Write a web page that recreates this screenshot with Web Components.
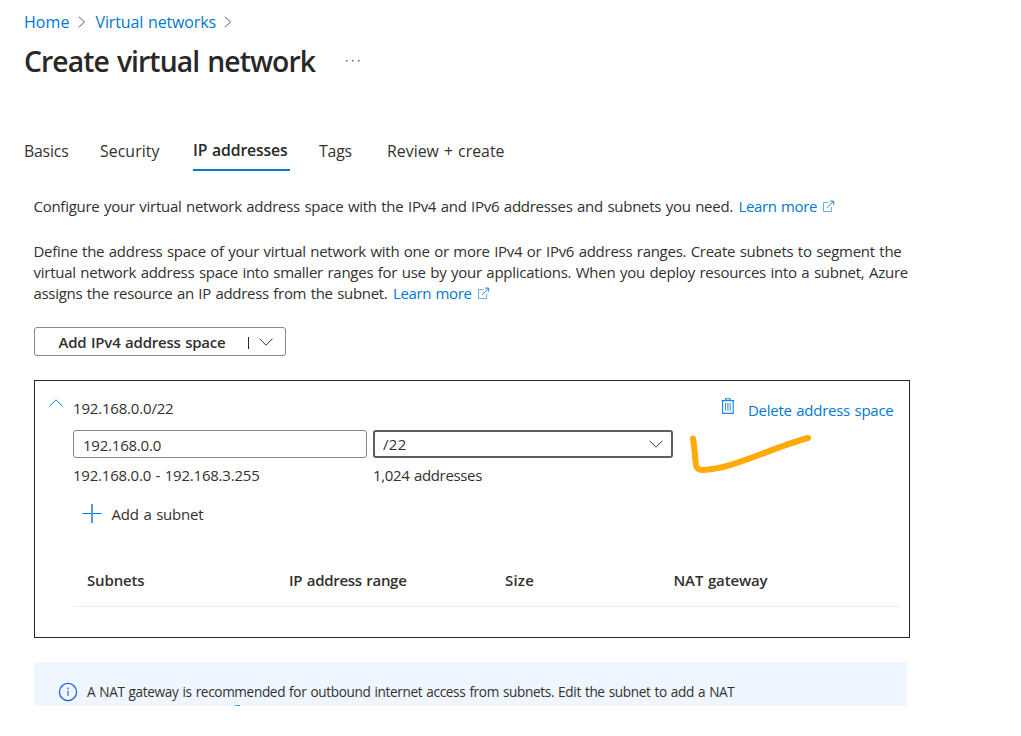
<!DOCTYPE html>
<html lang="en">
<head>
<meta charset="utf-8">
<title>Create virtual network</title>
<style>
html,body{margin:0;padding:0;background:#fff}
body{width:1021px;height:736px;overflow:hidden;font-family:"Open Sans","Noto Sans",sans-serif;font-size:15px;line-height:20px;color:#323130}
</style>
</head>
<body>
<vnet-page></vnet-page>
<script>
const define = (name, html, init) => {
  const t = document.createElement('template');
  t.innerHTML = html;
  customElements.define(name, class extends HTMLElement {
    connectedCallback() {
      if (this.shadowRoot) return;
      this.attachShadow({mode: 'open'}).append(t.content.cloneNode(true));
      if (init) init(this, this.shadowRoot);
    }
  });
};

/* A single line of text whose tracking is adjusted to fill a given width. */
define('text-run', `<style>
:host{display:inline-block;white-space:nowrap;flex:none}
span{display:inline-block;white-space:pre;word-spacing:.06em}
</style><span><slot></slot></span>`, (el, root) => {
  const w = parseFloat(el.getAttribute('w'));
  const span = root.querySelector('span');
  el.style.width = w + 'px';
  const natural = span.getBoundingClientRect().width;
  span.style.letterSpacing = ((w - natural) / el.textContent.length).toFixed(4) + 'px';
});

const icons = {
  right: [8, 12, '<path d="M.8 .8L6.6 6L.8 11.2" stroke="#605e5c"/>'],
  down: [14, 8, '<path d="M.5 .7L7 7.2L13.5 .7" stroke="#323130"/>'],
  up: [14, 8, '<path d="M.3 7.5L7 .8L13.7 7.5" stroke="#0078d4"/>'],
  external: [13, 13, '<path d="M6.5 2.5H1.5V11.5H9.5V7" stroke="#6db0e6"/><path d="M5 7.8L11.7 1.1M8 1.1H11.7V4.8" stroke="#2586d8"/>'],
  plus: [20, 20, '<path d="M.5 9.5H19.5" stroke="#0078d4"/><path d="M10 0V19" stroke="#4a9fe0" stroke-width="2"/>'],
  trash: [14, 16, '<path d="M.5 2.6H13.3M4.6 2.5V.7H9.3V2.5M1.6 2.6V15.3H12.2V2.6" stroke="#2586d8" stroke-width="1.15"/><path d="M4.6 5V12.7M6.9 5V12.7M9.2 5V12.7" stroke="#2586d8"/>'],
  info: [20, 20, '<circle cx="10" cy="10" r="8.6" stroke="#1a66dd" stroke-width="1.3"/><path d="M10 8.4V14" stroke="#1a66dd" stroke-width="1.1"/><circle cx="10" cy="6.4" r=".8" fill="#1a66dd"/>'],
  more: [16, 4, '<path d="M1 1h1.5v1.5H1zM7 1h1.5v1.5H7zM13 1h1.5v1.5H13z" fill="#605e5c"/>'],
  check: [124, 42, '<path d="M5 5.5C6.7 15 7 25 8 32Q9 37 14 37C46 36 82 15 120 5" stroke="#ffaa05" stroke-width="6" stroke-linecap="round" stroke-linejoin="round"/>']
};
define('line-icon', `<style>:host{display:inline-block;flex:none;line-height:0}svg{display:block}</style><div></div>`, (el, root) => {
  const [w, h, body] = icons[el.getAttribute('name')];
  root.querySelector('div').innerHTML = `<svg width="${w}" height="${h}" viewBox="0 0 ${w} ${h}" fill="none">${body}</svg>`;
});

define('bread-crumbs', `<style>
:host{display:flex;align-items:center;height:20px;padding:12px 0 0 24px;color:#0078d4;font-size:16px}
line-icon{margin:0 10px 0 8px}
</style><text-run w="45.5">Home</text-run><line-icon name="right"></line-icon><text-run w="120.5">Virtual networks</text-run><line-icon name="right"></line-icon>`);

define('page-title', `<style>
:host{display:flex;align-items:center;height:40px;margin-top:9px;padding-left:24px;line-height:40px;font-size:28.3px;font-weight:600;color:#292827}
line-icon{margin-left:30px}
</style><slot></slot><line-icon name="more"></line-icon>`);

define('tab-item', `<style>
:host{display:block;height:30px;padding-top:1px;box-sizing:border-box;font-size:15.8px}
:host([selected]){padding-top:0;height:31px;font-weight:600;color:#292827;border-bottom:2px solid #0078d4}
</style><slot></slot>`);

define('tab-strip', `<style>
:host{display:flex;height:31px;margin-top:59px;padding-left:24px}
</style><slot></slot>`);

define('doc-link', `<style>
:host{display:inline-flex;align-items:center;color:#0078d4}
line-icon{margin-left:5px}
</style><slot></slot><line-icon name="external"></line-icon>`);

define('split-button', `<style>
:host{display:flex;align-items:center;box-sizing:border-box;width:252px;height:29px;margin:23px 0 0 34px;padding-left:23.5px;border:1px solid #8a8886;border-radius:3px;font-weight:600}
i{width:1px;height:12px;background:#292827;margin:2px 10.5px 0 22px}
</style><text-run w="167">Add IPv4 address space</text-run><i></i><line-icon name="down"></line-icon>`);

define('field-box', `<style>
:host{display:flex;align-items:center;justify-content:space-between;box-sizing:border-box;height:28px;padding:1px 10px 0 9px;border:1px solid #8a8886;border-radius:3px;width:294px}
:host([select]){width:300px;border:2px solid #605e5c;padding:0 8px}
</style><slot></slot>`);

define('address-card', `<style>
:host{display:block;box-sizing:border-box;position:relative;width:876px;height:258px;margin:24px 0 0 34px;border:1px solid #292827}
.head{display:flex;height:20px;padding:17px 0 0 14px}
.head .up{margin:1px 10px 0 0}
.head .trash{margin:0 13px 0 547.5px}
.head .del{color:#0078d4;margin-top:2px}
.fields{display:flex;gap:6px;margin:12px 0 0 38px}
.notes{display:flex;margin:7px 0 0 38px}
.add{display:flex;align-items:center;height:20px;margin:19px 0 0 47px}
.add text-run{margin-left:9.5px}
.cols{display:grid;grid-template-columns:202px 216px 168.5px 1fr;width:813px;height:36px;margin:46px 0 0 38px;padding-left:14px;border-bottom:1px solid #edebe9;font-weight:600}
.mark{position:absolute;left:653px;top:52px}
</style>
<div class="head"><line-icon class="up" name="up"></line-icon><text-run w="100.5">192.168.0.0/22</text-run><line-icon class="trash" name="trash"></line-icon><text-run class="del" w="145.5">Delete address space</text-run></div>
<div class="fields"><field-box><text-run w="78">192.168.0.0</text-run></field-box><field-box select><text-run w="23.5">/22</text-run><line-icon name="down"></line-icon></field-box></div>
<div class="notes"><text-run w="186.5" style="margin-right:113.5px">192.168.0.0 - 192.168.3.255</text-run><text-run w="109">1,024 addresses</text-run></div>
<div class="add"><line-icon name="plus"></line-icon><text-run w="92">Add a subnet</text-run></div>
<div class="cols"><text-run w="57.5">Subnets</text-run><text-run w="117.5">IP address range</text-run><text-run w="29">Size</text-run><text-run w="94">NAT gateway</text-run></div>
<line-icon class="mark" name="check"></line-icon>`);

define('info-bar', `<style>
:host{display:flex;position:relative;overflow:hidden;box-sizing:border-box;width:873px;height:44px;margin:24px 0 0 34px;padding:20px 0 0 23.5px;background:#eff6ff;font-size:13.6px}
text-run{margin-left:9.5px}
b{position:absolute;left:201px;top:43px;width:5px;height:1px;background:#4a9fe0}
</style><line-icon name="info"></line-icon><text-run w="647.5">A NAT gateway is recommended for outbound internet access from subnets. Edit the subnet to add a NAT</text-run><b></b>`);

define('vnet-page', `<style>
:host{display:block}
.intro{display:flex;margin:25px 0 0 33.5px}
.detail{display:flex;flex-direction:column;margin:25px 0 0 33.5px;line-height:21px}
.row{display:flex}
doc-link{margin-left:5.5px}
</style>
<bread-crumbs></bread-crumbs>
<page-title><text-run w="291">Create virtual network</text-run></page-title>
<tab-strip>
<tab-item style="width:76px"><text-run w="44.5">Basics</text-run></tab-item>
<tab-item style="width:93px"><text-run w="59.5">Security</text-run></tab-item>
<tab-item selected style="width:97px"><text-run w="94.5">IP addresses</text-run></tab-item>
<tab-item style="width:68px;margin-left:29px"><text-run w="33">Tags</text-run></tab-item>
<tab-item><text-run w="117.5">Review + create</text-run></tab-item>
</tab-strip>
<div class="intro"><text-run w="699.5">Configure your virtual network address space with the IPv4 and IPv6 addresses and subnets you need.</text-run><doc-link><text-run w="78.5">Learn more</text-run></doc-link></div>
<div class="detail">
<text-run w="868">Define the address space of your virtual network with one or more IPv4 or IPv6 address ranges. Create subnets to segment the</text-run>
<text-run w="874.5">virtual network address space into smaller ranges for use by your applications. When you deploy resources into a subnet, Azure</text-run>
<div class="row"><text-run w="354">assigns the resource an IP address from the subnet.</text-run><doc-link><text-run w="78.5">Learn more</text-run></doc-link></div>
</div>
<split-button></split-button>
<address-card></address-card>
<info-bar></info-bar>`);
</script>
</body>
</html>
